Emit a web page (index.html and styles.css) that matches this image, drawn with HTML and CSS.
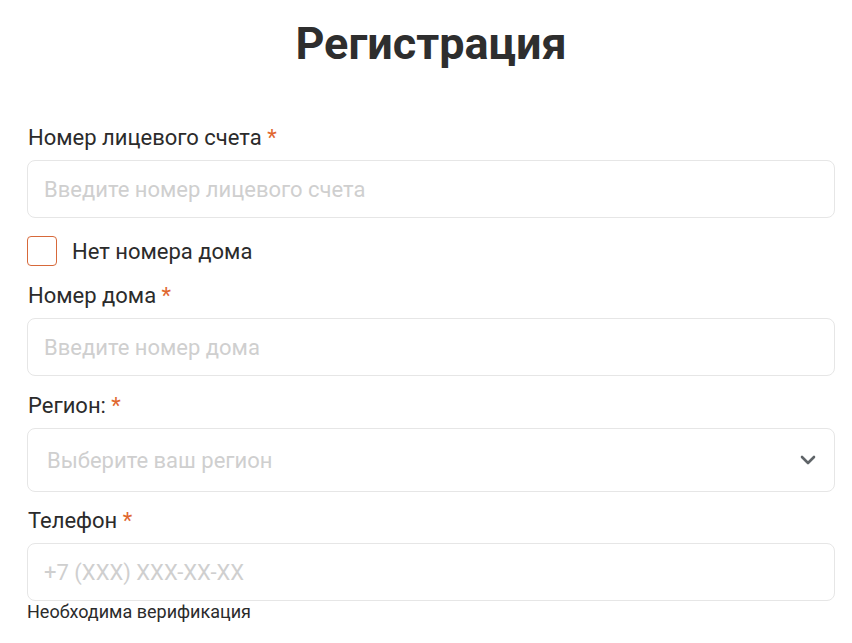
FILE: index.html
```html
<!DOCTYPE html>
<html lang="ru">
<head>
    <meta charset="UTF-8">
    <meta name="viewport" content="width=device-width, initial-scale=1.0">
    <title>Регистрация</title>
    <link rel="stylesheet" href="styles.css">
</head>
<body>
    <div id="container">
        <h1>Регистрация</h1>

        <form class="reg-form">
            <label class="field-label" for="account">Номер лицевого счета <span class="req">*</span></label>
            <input type="text" id="account" class="field" placeholder="Введите номер лицевого счета">

            <label class="check-row">
                <input type="checkbox" class="check">
                <span>Нет номера дома</span>
            </label>

            <label class="field-label" for="house">Номер дома <span class="req">*</span></label>
            <input type="text" id="house" class="field" placeholder="Введите номер дома">

            <label class="field-label" for="region">Регион: <span class="req">*</span></label>
            <div class="select-box" id="region">
                <span class="select-text">Выберите ваш регион</span>
                <svg class="chevron" width="16" height="10" viewBox="0 0 16 10">
                    <path d="M2 2 L8 8 L14 2" fill="none" stroke="#5f6468" stroke-width="2.6" stroke-linecap="round" stroke-linejoin="round"/>
                </svg>
            </div>

            <label class="field-label" for="phone">Телефон <span class="req">*</span></label>
            <input type="text" id="phone" class="field" placeholder="+7 (XXX) XXX-XX-XX">
            <p class="hint">Необходима верификация</p>
        </form>
    </div>
</body>
</html>
```

FILE: styles.css
```css
body {
    font-family: Roboto, "Liberation Sans", sans-serif;
    margin: 0;
    padding: 0;
    background-color: #fff;
    color: #2b2b2b;
}

#container {
    padding: 0 17px 0 27px;
}

h1 {
    margin: 0;
    padding-top: 16px;
    height: 56px;
    line-height: 56px;
    text-align: center;
    font-size: 45px;
    font-weight: 700;
    color: #2e2e2e;
}

.reg-form {
    display: flex;
    flex-direction: column;
    padding-top: 53px;
}

.field-label {
    display: block;
    font-size: 22px;
    line-height: 26px;
    margin-bottom: 9px;
    padding-left: 1px;
}

.req {
    color: #e0672f;
}

.field {
    box-sizing: border-box;
    height: 58px;
    padding: 0 16px;
    border: 1px solid #e6e6e6;
    border-radius: 8px;
    font-family: inherit;
    font-size: 22px;
    color: #2b2b2b;
    outline: none;
}

.field::placeholder {
    color: #cfcfcf;
}

.check-row {
    display: flex;
    align-items: center;
    gap: 15px;
    margin: 18px 0 17px;
    font-size: 22px;
    height: 30px;
}

.check {
    appearance: none;
    margin: 0;
    width: 30px;
    height: 30px;
    border: 1px solid #d7693a;
    border-radius: 4px;
    background: #fff;
}

.select-box {
    box-sizing: border-box;
    height: 64px;
    padding: 0 18px 0 19px;
    border: 1px solid #e6e6e6;
    border-radius: 8px;
    display: flex;
    align-items: center;
    justify-content: space-between;
    font-size: 22px;
}

.select-text {
    color: #cfcfcf;
}

.field + .field-label {
    margin-top: 17px;
}

.select-box + .field-label {
    margin-top: 16px;
}

.hint {
    margin: 0;
    font-size: 18px;
    line-height: 22px;
}
```
